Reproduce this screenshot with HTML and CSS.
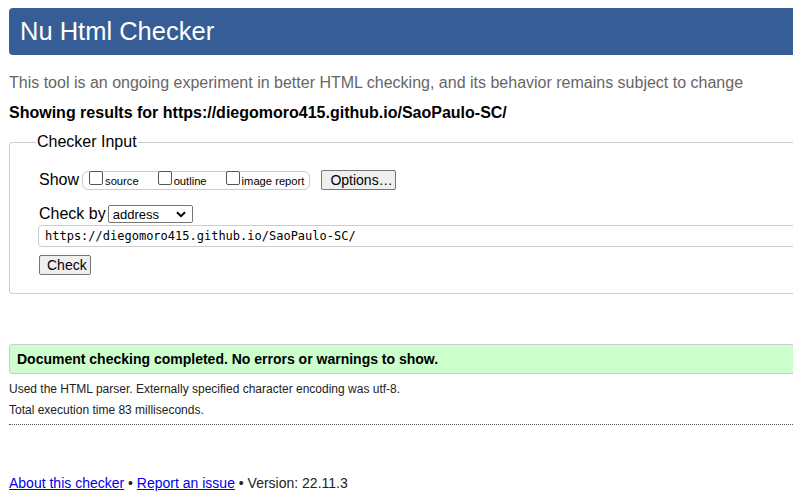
FILE: index.html
```html
<!DOCTYPE html>
<html>
<head>
<meta charset="utf-8">
<link rel="stylesheet" href="styles.css">
</head>
<body>
<div class="page">
  <h1 class="title">Nu Html Checker</h1>
  <p class="intro">This tool is an ongoing experiment in better HTML checking, and its behavior remains subject to change</p>
  <p class="results">Showing results for https://diegomoro415.github.io/SaoPaulo-SC/</p>
  <fieldset class="input-box">
    <legend class="legend">Checker Input</legend>
    <div class="row show-row">
      <span class="label">Show</span>
      <span class="opts">
        <label class="opt"><span class="cb"></span><span class="opt-text">source</span></label>
        <label class="opt gap"><span class="cb"></span><span class="opt-text">outline</span></label>
        <label class="opt gap"><span class="cb"></span><span class="opt-text">image report</span></label>
      </span>
      <span class="btn options-btn">Options…</span>
    </div>
    <div class="row by-row">
      <span class="label">Check by</span>
      <span class="select">address<svg class="chev" width="10" height="7" viewBox="0 0 10 7"><path d="M1 1.2 L5 5.2 L9 1.2" fill="none" stroke="#000" stroke-width="2"/></svg></span>
    </div>
    <div class="url">https://diegomoro415.github.io/SaoPaulo-SC/</div>
    <div class="row check-row"><span class="btn check-btn">Check</span></div>
  </fieldset>
  <div class="success">Document checking completed. No errors or warnings to show.</div>
  <p class="details">Used the HTML parser. Externally specified character encoding was utf-8.</p>
  <p class="details">Total execution time 83 milliseconds.</p>
  <hr class="dots">
  <p class="footer"><a href="#">About this checker</a> • <a href="#">Report an issue</a> • Version: 22.11.3</p>
</div>
</body>
</html>
```
FILE: styles.css
```css
html, body {
  margin: 0;
  padding: 0;
  overflow: hidden;
  background: #fff;
}
body {
  font-family: "Liberation Sans", Arial, sans-serif;
  color: #000;
}
.page {
  width: 830px;
  padding: 8px 0 0 9px;
}
.title {
  margin: 0;
  background: #365d95;
  color: #fff;
  font-weight: normal;
  font-size: 25.5px;
  line-height: 47px;
  height: 47px;
  padding-left: 11px;
  border-radius: 4px 0 0 4px;
}
.intro {
  margin: 18px 0 0 0;
  font-size: 16px;
  line-height: 20px;
  color: #666;
}
.results {
  margin: 10px 0 0 0;
  font-size: 16px;
  font-weight: bold;
  line-height: 20px;
}
.input-box {
  margin: 10px 0 0 0;
  border: 1px solid #ccc;
  border-radius: 3px;
  padding: 8px 0 18px 29px;
  min-width: 0;
}
.legend {
  font-size: 16px;
  padding: 0 1px;
  margin-left: -3px;
  line-height: 18px;
}
.row {
  display: flex;
  align-items: center;
}
.label {
  font-size: 16px;
}
.opts {
  display: inline-flex;
  align-items: center;
  margin-left: 3px;
  border: 1px solid #ccc;
  border-radius: 6px;
  height: 17px;
  padding: 0 5px 0 6px;
}
.opt {
  display: inline-flex;
  align-items: center;
  font-size: 11.2px;
}
.opt.gap { margin-left: 19px; }
.cb {
  display: inline-block;
  width: 12px;
  height: 12px;
  border: 1px solid #555;
  border-radius: 2px;
  margin-right: 2px;
  position: relative;
  top: -2px;
}
.opt-text { padding-top: 2px; }
.btn {
  display: inline-block;
  box-sizing: border-box;
  background: #efefef;
  border: 1px solid #767676;
  border-radius: 2px;
  font-size: 14px;
  height: 20px;
  line-height: 18px;
  padding: 0 6px;
  color: #000;
}
.options-btn {
  margin-left: 11px;
  width: 75px;
  padding: 0 0 0 8px;
}
.show-row {
  margin-top: 11px;
  height: 20px;
}
.by-row {
  margin-top: 14px;
  height: 20px;
}
.select {
  display: inline-flex;
  align-items: center;
  justify-content: space-between;
  box-sizing: border-box;
  width: 85px;
  height: 18px;
  margin-left: 2px;
  border: 1px solid #767676;
  border-radius: 2px;
  font-size: 13px;
  padding: 0 6px 0 4px;
}
.chev { margin-left: 4px; }
.url {
  margin-top: 1px;
  margin-left: -1px;
  border: 1px solid #ccc;
  border-radius: 4px;
  height: 20px;
  line-height: 20px;
  padding-left: 6px;
  font-family: "DejaVu Sans Mono", "Liberation Mono", monospace;
  font-size: 12px;
}
.check-row { margin-top: 8px; }
.check-btn {
  width: 52px;
  padding: 0 0 0 7px;
}
.success {
  margin-top: 50px;
  background: #ccffcc;
  border: 1px solid #ccc;
  border-radius: 3px 0 0 3px;
  font-weight: bold;
  font-size: 14px;
  line-height: 28px;
  padding-left: 7px;
}
.details {
  margin: 7px 0 0 0;
  font-size: 12px;
  line-height: 16px;
  color: #222;
}
.details + .details { margin-top: 5px; }
.dots {
  margin: 6px 0 0 0;
  border: 0;
  border-top: 1px dotted #555;
  height: 0;
}
.footer {
  margin: 49px 0 0 0;
  font-size: 14px;
  line-height: 18px;
  color: #222;
}
.footer a { color: #00e; }
```
